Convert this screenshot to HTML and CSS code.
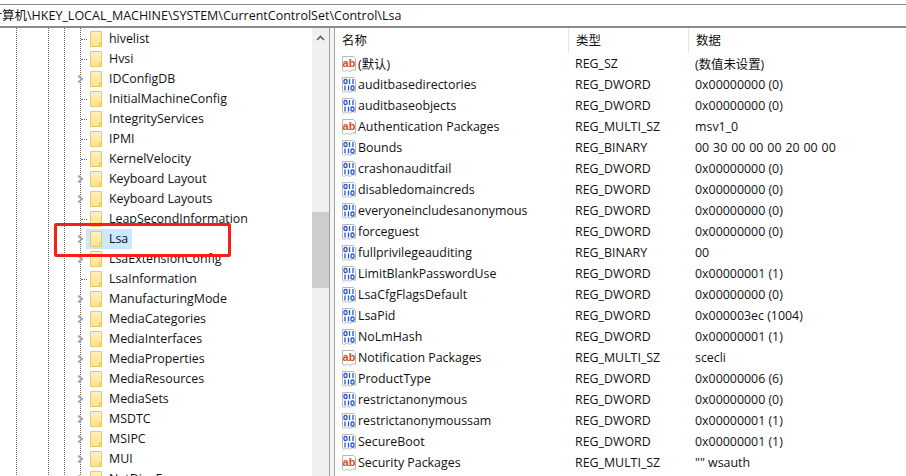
FILE: index.html
```html
<!DOCTYPE html>
<html lang="zh-CN">
<head>
<meta charset="utf-8">
<title>注册表编辑器</title>
<link rel="stylesheet" href="styles.css">
</head>
<body>
<svg class="defs" width="0" height="0" aria-hidden="true">
  <symbol id="folder" viewBox="0 0 12 16">
    <defs><linearGradient id="fg" x1="0" y1="0" x2="0" y2="1"><stop offset="0" stop-color="#fff2c0"/><stop offset="1" stop-color="#ffe48e"/></linearGradient></defs>
    <path d="M.5.5h11v15H.5z" fill="url(#fg)" stroke="#eec75e"/>
    <path d="M9.500 15.500V11.500h2" fill="none" stroke="#eec75e"/>
  </symbol>
  <symbol id="sz" viewBox="0 0 16 16">
    <path d="M1.500.5h11l2 2v12c-2-1.500-3-.5-4.500.5s-3-1-4.500-.5-3 1.500-4 0z" fill="#fff" stroke="#b8b8b8"/>
    <text x="8" y="10.500" text-anchor="middle" class="ab">ab</text>
  </symbol>
  <symbol id="bin" viewBox="0 0 16 16">
    <path d="M1.500.5h11l2 2v12c-2-1.500-3-.5-4.500.5s-3-1-4.500-.5-3 1.500-4 0z" fill="#fff" stroke="#b8b8b8"/>
    <g fill="none" stroke="#2457d6" stroke-width="1.300">
      <rect x="3" y="2.500" width="3" height="4" rx="1.200"/><path d="M8.500 2v5M12 2v5"/>
      <path d="M4 8.500v5M7.500 8.500v5"/><rect x="10" y="9" width="3" height="4" rx="1.200"/>
    </g>
  </symbol>
</svg>

<header class="address">计算机\HKEY_LOCAL_MACHINE\SYSTEM\CurrentControlSet\Control\Lsa</header>

<main class="panes">
  <section class="tree">
    <ul class="keys">
      <li class="key"><i class="dots"></i><svg class="folder"><use href="#folder"/></svg><span>hivelist</span></li>
      <li class="key"><i class="dots"></i><svg class="folder"><use href="#folder"/></svg><span>Hvsi</span></li>
      <li class="key"><i class="chev"></i><svg class="folder"><use href="#folder"/></svg><span>IDConfigDB</span></li>
      <li class="key"><i class="dots"></i><svg class="folder"><use href="#folder"/></svg><span>InitialMachineConfig</span></li>
      <li class="key"><i class="dots"></i><svg class="folder"><use href="#folder"/></svg><span>IntegrityServices</span></li>
      <li class="key"><i class="dots"></i><svg class="folder"><use href="#folder"/></svg><span>IPMI</span></li>
      <li class="key"><i class="dots"></i><svg class="folder"><use href="#folder"/></svg><span>KernelVelocity</span></li>
      <li class="key"><i class="chev"></i><svg class="folder"><use href="#folder"/></svg><span>Keyboard Layout</span></li>
      <li class="key"><i class="chev"></i><svg class="folder"><use href="#folder"/></svg><span>Keyboard Layouts</span></li>
      <li class="key"><i class="dots"></i><svg class="folder"><use href="#folder"/></svg><span>LeapSecondInformation</span></li>
      <li class="key selected"><i class="chev"></i><svg class="folder"><use href="#folder"/></svg><span>Lsa</span><b class="callout"></b></li>
      <li class="key"><i class="chev"></i><svg class="folder"><use href="#folder"/></svg><span>LsaExtensionConfig</span></li>
      <li class="key"><i class="dots"></i><svg class="folder"><use href="#folder"/></svg><span>LsaInformation</span></li>
      <li class="key"><i class="chev"></i><svg class="folder"><use href="#folder"/></svg><span>ManufacturingMode</span></li>
      <li class="key"><i class="chev"></i><svg class="folder"><use href="#folder"/></svg><span>MediaCategories</span></li>
      <li class="key"><i class="chev"></i><svg class="folder"><use href="#folder"/></svg><span>MediaInterfaces</span></li>
      <li class="key"><i class="chev"></i><svg class="folder"><use href="#folder"/></svg><span>MediaProperties</span></li>
      <li class="key"><i class="chev"></i><svg class="folder"><use href="#folder"/></svg><span>MediaResources</span></li>
      <li class="key"><i class="chev"></i><svg class="folder"><use href="#folder"/></svg><span>MediaSets</span></li>
      <li class="key"><i class="chev"></i><svg class="folder"><use href="#folder"/></svg><span>MSDTC</span></li>
      <li class="key"><i class="chev"></i><svg class="folder"><use href="#folder"/></svg><span>MSIPC</span></li>
      <li class="key"><i class="chev"></i><svg class="folder"><use href="#folder"/></svg><span>MUI</span></li>
      <li class="key"><i class="chev"></i><svg class="folder"><use href="#folder"/></svg><span>NetDiagFx</span></li>
    </ul>
  </section>
  <div class="scrollbar">
    <div class="track-top"><svg class="arrow" viewBox="0 0 9 6"><path d="M1 5l3.500-3.500L8 5" fill="none" stroke="#606060" stroke-width="1.600"/></svg></div>
    <div class="thumb"></div>
  </div>
  <div class="divider"></div>
  <section class="values">
    <div class="row head"><div class="c1">名称</div><div class="c2">类型</div><div class="c3">数据</div></div>
    <div class="row"><div class="c1"><svg class="ic"><use href="#sz"/></svg>(默认)</div><div class="c2">REG_SZ</div><div class="c3">(数值未设置)</div></div>
    <div class="row"><div class="c1"><svg class="ic"><use href="#bin"/></svg>auditbasedirectories</div><div class="c2">REG_DWORD</div><div class="c3">0x00000000 (0)</div></div>
    <div class="row"><div class="c1"><svg class="ic"><use href="#bin"/></svg>auditbaseobjects</div><div class="c2">REG_DWORD</div><div class="c3">0x00000000 (0)</div></div>
    <div class="row"><div class="c1"><svg class="ic"><use href="#sz"/></svg>Authentication Packages</div><div class="c2">REG_MULTI_SZ</div><div class="c3">msv1_0</div></div>
    <div class="row"><div class="c1"><svg class="ic"><use href="#bin"/></svg>Bounds</div><div class="c2">REG_BINARY</div><div class="c3 hex">00 30 00 00 00 20 00 00</div></div>
    <div class="row"><div class="c1"><svg class="ic"><use href="#bin"/></svg>crashonauditfail</div><div class="c2">REG_DWORD</div><div class="c3">0x00000000 (0)</div></div>
    <div class="row"><div class="c1"><svg class="ic"><use href="#bin"/></svg>disabledomaincreds</div><div class="c2">REG_DWORD</div><div class="c3">0x00000000 (0)</div></div>
    <div class="row"><div class="c1"><svg class="ic"><use href="#bin"/></svg>everyoneincludesanonymous</div><div class="c2">REG_DWORD</div><div class="c3">0x00000000 (0)</div></div>
    <div class="row"><div class="c1"><svg class="ic"><use href="#bin"/></svg>forceguest</div><div class="c2">REG_DWORD</div><div class="c3">0x00000000 (0)</div></div>
    <div class="row"><div class="c1"><svg class="ic"><use href="#bin"/></svg>fullprivilegeauditing</div><div class="c2">REG_BINARY</div><div class="c3">00</div></div>
    <div class="row"><div class="c1"><svg class="ic"><use href="#bin"/></svg>LimitBlankPasswordUse</div><div class="c2">REG_DWORD</div><div class="c3">0x00000001 (1)</div></div>
    <div class="row"><div class="c1"><svg class="ic"><use href="#bin"/></svg>LsaCfgFlagsDefault</div><div class="c2">REG_DWORD</div><div class="c3">0x00000000 (0)</div></div>
    <div class="row"><div class="c1"><svg class="ic"><use href="#bin"/></svg>LsaPid</div><div class="c2">REG_DWORD</div><div class="c3">0x000003ec (1004)</div></div>
    <div class="row"><div class="c1"><svg class="ic"><use href="#bin"/></svg>NoLmHash</div><div class="c2">REG_DWORD</div><div class="c3">0x00000001 (1)</div></div>
    <div class="row"><div class="c1"><svg class="ic"><use href="#sz"/></svg>Notification Packages</div><div class="c2">REG_MULTI_SZ</div><div class="c3">scecli</div></div>
    <div class="row"><div class="c1"><svg class="ic"><use href="#bin"/></svg>ProductType</div><div class="c2">REG_DWORD</div><div class="c3">0x00000006 (6)</div></div>
    <div class="row"><div class="c1"><svg class="ic"><use href="#bin"/></svg>restrictanonymous</div><div class="c2">REG_DWORD</div><div class="c3">0x00000000 (0)</div></div>
    <div class="row"><div class="c1"><svg class="ic"><use href="#bin"/></svg>restrictanonymoussam</div><div class="c2">REG_DWORD</div><div class="c3">0x00000001 (1)</div></div>
    <div class="row"><div class="c1"><svg class="ic"><use href="#bin"/></svg>SecureBoot</div><div class="c2">REG_DWORD</div><div class="c3">0x00000001 (1)</div></div>
    <div class="row"><div class="c1"><svg class="ic"><use href="#sz"/></svg>Security Packages</div><div class="c2">REG_MULTI_SZ</div><div class="c3">"" wsauth</div></div>
  </section>
</main>
</body>
</html>
```
FILE: styles.css
```css
* { box-sizing: border-box; }
html, body { margin: 0; height: 100%; overflow: hidden; background: #fff; }
body {
  display: flex;
  flex-direction: column;
  padding-top: 4px;
  font: 12.4px "Open Sans", "Noto Sans CJK SC", sans-serif;
  color: #111;
}
.defs { position: absolute; }
.ab { font: bold 11px "Liberation Sans", sans-serif; fill: #dc4a22; }
.address {
  flex: none;
  height: 24px;
  border-top: 1px solid #8a8a8a;
  border-bottom: 2px solid #8a8a8a;
  text-indent: -10.5px;
  line-height: 21px;
  font-size: 12.5px;
  white-space: nowrap;
  overflow: hidden;
}
.panes { flex: 1; display: flex; min-height: 0; }
.tree {
  width: 312px;
  flex: none;
  overflow: hidden;
  padding: 0 0 0 80px;
  background:
    linear-gradient(#666 50%, transparent 50%) 16px 0 / 1px 2px repeat-y,
    linear-gradient(#666 50%, transparent 50%) 48px 0 / 1px 2px repeat-y,
    linear-gradient(#666 50%, transparent 50%) 64px 0 / 1px 2px repeat-y,
    linear-gradient(#666 50%, transparent 50%) 80px 0 / 1px 2px repeat-y;
}
.keys { list-style: none; margin: 0; padding: 0; }
.key {
  position: relative;
  display: flex;
  align-items: center;
  height: 20px;
  white-space: nowrap;
}
.dots { width: 6px; margin: 2px 3px 0 1px; height: 0; border-top: 1px dotted #666; }
.chev {
  width: 6px; height: 6px;
  margin: 2px 8px 0 -4px;
  border-top: 2px solid #a6a6a6; border-right: 2px solid #a6a6a6;
  transform: rotate(45deg);
}
.folder { width: 12px; height: 16px; flex: none; margin: 2px 7px 0 0; }
.selected::before {
  content: "";
  position: absolute;
  left: 6px; top: 1px; width: 46px; height: 20px;
  background: #cce8ff;
}
.selected > .chev, .selected > .folder, .selected > span { position: relative; }
.callout {
  position: absolute;
  left: -26px; top: -5px;
  width: 177px; height: 34px;
  border: 3px solid #f5201a;
  border-radius: 2px;
  z-index: 2;
}
.scrollbar { width: 17px; flex: none; background: #f0f0f0; display: flex; flex-direction: column; }
.track-top { height: 184px; display: flex; justify-content: center; padding-top: 7px; }
.arrow { width: 9px; height: 6px; }
.thumb { height: 76px; background: #cdcdcd; }
.divider { width: 6px; flex: none; background: #f4f4f4; border-left: 1px solid #a0a0a0; border-right: 1px solid #a0a0a0; }
.values { flex: 1; min-width: 0; overflow: hidden; }
.row {
  display: grid;
  grid-template-columns: 233px 120px 1fr;
  height: 21px;
  align-items: center;
  white-space: nowrap;
}
.row .c1 { display: flex; align-items: center; padding-left: 6px; }
.row .c2, .row .c3 { padding-left: 7px; }
.hex { word-spacing: 0.7px; }
.head { height: 25px; }
.row.head .c1, .row.head .c2, .row.head .c3 { padding-left: 7px; align-self: stretch; line-height: 25px; }
.row.head .c2, .row.head .c3 { border-left: 1px solid #e5e5e5; }
.ic { width: 16px; height: 16px; flex: none; margin-right: 1px; }
```
